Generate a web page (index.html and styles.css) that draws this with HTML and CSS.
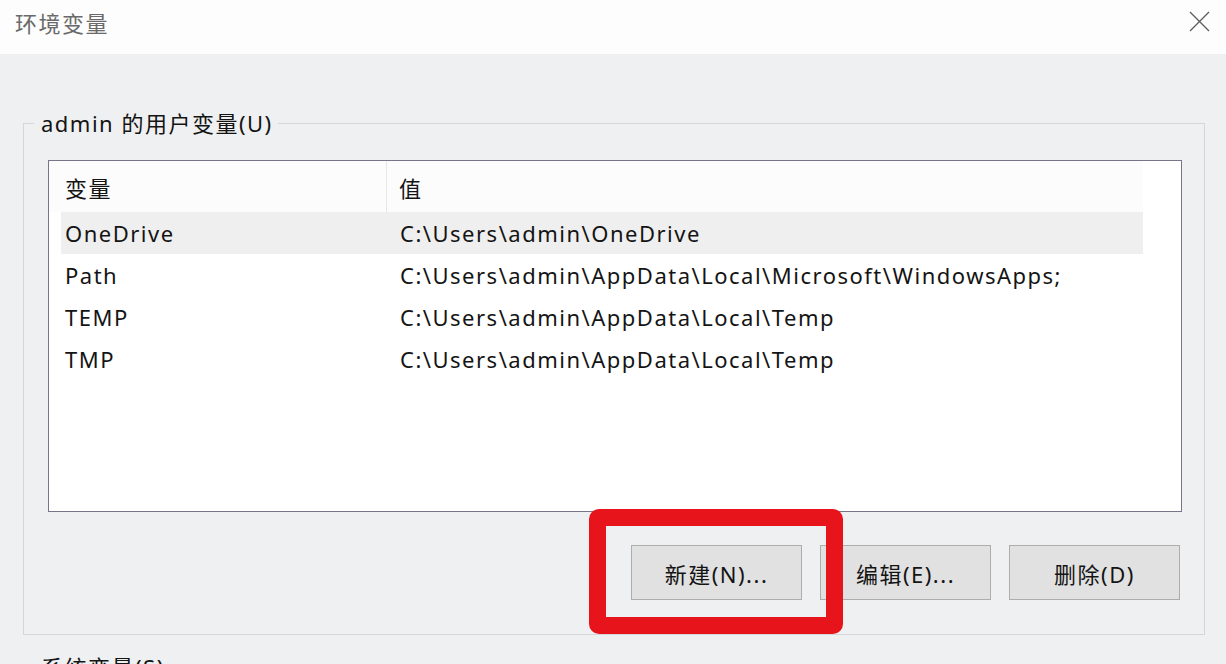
FILE: index.html
```html
<!DOCTYPE html>
<html lang="zh-CN">
<head>
    <meta charset="UTF-8">
    <title>环境变量</title>
    <link rel="stylesheet" href="styles.css">
</head>
<body>
    <div class="titlebar">
        <span class="title">环境变量</span>
        <span class="close-btn">
            <svg width="21" height="21" viewBox="0 0 21 21">
                <path d="M1 1 L20 20 M20 1 L1 20" stroke="#5c5c5c" stroke-width="1.3" fill="none"/>
            </svg>
        </span>
    </div>

    <fieldset class="group">
        <legend>admin 的用户变量(U)</legend>
        <div class="var-list">
            <div class="list-header">
                <div class="head-cell col-name">变量</div>
                <div class="head-cell col-value">值</div>
            </div>
            <div class="list-row selected">
                <div class="cell">OneDrive</div>
                <div class="cell">C:\Users\admin\OneDrive</div>
            </div>
            <div class="list-row">
                <div class="cell">Path</div>
                <div class="cell">C:\Users\admin\AppData\Local\Microsoft\WindowsApps;</div>
            </div>
            <div class="list-row">
                <div class="cell">TEMP</div>
                <div class="cell">C:\Users\admin\AppData\Local\Temp</div>
            </div>
            <div class="list-row">
                <div class="cell">TMP</div>
                <div class="cell">C:\Users\admin\AppData\Local\Temp</div>
            </div>
        </div>
        <div class="button-row">
            <button class="win-button">新建(N)...</button>
            <button class="win-button">编辑(E)...</button>
            <button class="win-button">删除(D)</button>
        </div>
    </fieldset>

    <fieldset class="group">
        <legend>系统变量(S)</legend>
    </fieldset>

    <div class="highlight"></div>
</body>
</html>
```

FILE: styles.css
```css
body {
    margin: 0;
    padding: 0;
    width: 1226px;
    height: 664px;
    overflow: hidden;
    position: relative;
    background: #eff0f1;
    font-family: "Noto Sans", "Noto Sans CJK SC", sans-serif;
    font-size: 22px;
    letter-spacing: 1.5px;
    color: #141414;
}
.titlebar {
    height: 54px;
    background: #fdfdfd;
    display: flex;
    align-items: center;
    justify-content: space-between;
    padding: 0 16px 0 15px;
}
.title {
    color: #6a6a6a;
    font-size: 22px;
    margin-top: -11px;
}
.close-btn {
    display: flex;
    margin-top: -11px;
}
.group {
    margin: 57px 21px 0 23px;
    padding: 25px 22px 34px 24px;
    border: 1px solid #d6d6d6;
    min-width: 0;
}
.group legend {
    margin-left: -14px;
    padding: 0 5px 0 7px;
    line-height: 24px;
}
.group + .group {
    margin-top: 20px;
}
.var-list {
    height: 350px;
    background: #fff;
    border: 1px solid #767688;
}
.list-header {
    display: flex;
    width: 1094px;
    height: 51px;
    background: #fcfcfd;
}
.head-cell {
    display: flex;
    align-items: center;
}
.col-name {
    width: 338px;
    padding-left: 16px;
    box-sizing: border-box;
    border-right: 1px solid #e6e6e6;
}
.col-value {
    padding-left: 12px;
}
.list-row {
    display: grid;
    grid-template-columns: 339px 1fr;
    align-items: center;
    width: 1082px;
    height: 42px;
    margin-left: 12px;
    white-space: nowrap;
}
.list-row .cell:first-child {
    padding-left: 4px;
}
.list-row.selected {
    background: #efefef;
}
.button-row {
    display: flex;
    justify-content: flex-end;
    gap: 18px;
    margin-top: 33px;
    padding-right: 2px;
}
.win-button {
    width: 171px;
    height: 55px;
    background: #e1e1e1;
    border: 1px solid #adadad;
    font-family: inherit;
    font-size: 22px;
    letter-spacing: 1.5px;
    color: #141414;
    padding: 0;
}
.highlight {
    position: absolute;
    left: 589px;
    top: 509px;
    width: 254px;
    height: 125px;
    box-sizing: border-box;
    border: 17px solid #e8141c;
    border-radius: 10px;
}
```
